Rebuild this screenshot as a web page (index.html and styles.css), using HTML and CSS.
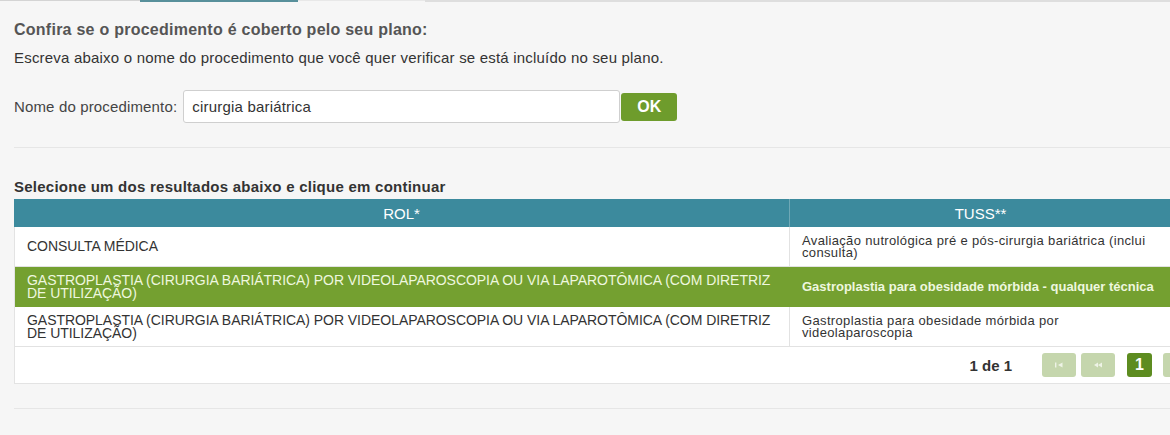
FILE: index.html
```html
<!DOCTYPE html>
<html lang="pt-BR">
<head>
<meta charset="utf-8">
<title>Confira se o procedimento é coberto</title>
<link rel="stylesheet" href="styles.css">
</head>
<body>
<div class="tabs">
  <span class="tabs-left"></span>
  <span class="tabs-active"></span>
  <span class="tabs-mid"></span>
  <span class="tabs-rest"></span>
</div>
<main class="content">
  <h2 class="title">Confira se o procedimento é coberto pelo seu plano:</h2>
  <p class="hint">Escreva abaixo o nome do procedimento que você quer verificar se está incluído no seu plano.</p>
  <form class="search">
    <label class="search-label" for="proc">Nome do procedimento:</label>
    <input class="search-input" id="proc" type="text" value="cirurgia bariátrica">
    <button class="search-btn" type="button">OK</button>
  </form>
  <hr class="divider">
  <h3 class="results-title">Selecione um dos resultados abaixo e clique em continuar</h3>
  <div class="results">
    <div class="row row-head">
      <div class="cell head">ROL*</div>
      <div class="cell head">TUSS**</div>
    </div>
    <div class="row">
      <div class="cell rol">CONSULTA MÉDICA</div>
      <div class="cell tuss">Avaliação nutrológica pré e pós-cirurgia bariátrica (inclui consulta)</div>
    </div>
    <div class="row row-selected">
      <div class="cell rol">GASTROPLASTIA (CIRURGIA BARIÁTRICA) POR VIDEOLAPAROSCOPIA OU VIA LAPAROTÔMICA (COM DIRETRIZ DE UTILIZAÇÃO)</div>
      <div class="cell tuss">Gastroplastia para obesidade mórbida - qualquer técnica</div>
    </div>
    <div class="row">
      <div class="cell rol">GASTROPLASTIA (CIRURGIA BARIÁTRICA) POR VIDEOLAPAROSCOPIA OU VIA LAPAROTÔMICA (COM DIRETRIZ DE UTILIZAÇÃO)</div>
      <div class="cell tuss">Gastroplastia para obesidade mórbida por videolaparoscopia</div>
    </div>
    <div class="pager">
      <span class="pager-count">1 de 1</span>
      <span class="pg-btn pg-first"><svg width="10" height="8" viewBox="0 0 10 8"><rect x="1" y="1.5" width="1.4" height="5"/><path d="M8.5 1.5v5L4 4z"/></svg></span>
      <span class="pg-btn pg-prev"><svg width="10" height="8" viewBox="0 0 10 8"><path d="M5 1.5v5L1 4zM9 1.5v5L5 4z"/></svg></span>
      <span class="pg-btn pg-num">1</span>
      <span class="pg-btn pg-next"><svg width="10" height="8" viewBox="0 0 10 8"><path d="M1 1.5v5L5 4zM5 1.5v5L9 4z"/></svg></span>
      <span class="pg-btn pg-last"><svg width="10" height="8" viewBox="0 0 10 8"><path d="M1.5 1.5v5L6 4z"/><rect x="7.6" y="1.5" width="1.4" height="5"/></svg></span>
    </div>
  </div>
  <hr class="divider divider-bottom">
</main>
</body>
</html>
```

FILE: styles.css
```css
html, body {
  margin: 0;
  overflow: hidden;
}

body {
  width: 1170px;
  height: 435px;
  background: #f6f6f6;
  font-family: "Liberation Sans", Arial, sans-serif;
  color: #333;
}

.tabs {
  display: flex;
  height: 3px;
}

.tabs-left {
  width: 140px;
  border-top: 1px solid #d4d4d4;
}

.tabs-active {
  width: 158px;
  height: 2px;
  background: #58909b;
}

.tabs-mid {
  width: 127px;
  border-top: 1px solid #e8e8e8;
}

.tabs-rest {
  flex: 1;
  border-top: 2px solid #dedede;
}

.content {
  width: 1233px;
  padding-left: 14px;
}

.title {
  margin: 18px 0 0;
  font-size: 16px;
  line-height: 18px;
  letter-spacing: 0.25px;
  font-weight: bold;
  color: #555;
}

.hint {
  margin: 10px 0 0;
  font-size: 15px;
  line-height: 18px;
  letter-spacing: 0.2px;
  color: #333;
}

.search {
  display: flex;
  align-items: center;
  height: 33px;
  margin: 23px 0 0;
}

.search-label {
  margin-right: 6px;
  font-size: 15px;
  line-height: 18px;
  letter-spacing: 0.15px;
  color: #444;
}

.search-input {
  box-sizing: border-box;
  width: 437px;
  height: 33px;
  padding: 0 8px;
  border: 1px solid #cfcfcf;
  border-radius: 3px;
  background: #fff;
  font: 15px "Liberation Sans", Arial, sans-serif;
  letter-spacing: 0.2px;
  color: #333;
}

.search-btn {
  width: 56px;
  height: 28px;
  margin-left: 1px;
  padding: 0;
  border: 0;
  border-radius: 3px;
  background: #6e9c2c;
  color: #fff;
  font: bold 16px "Liberation Sans", Arial, sans-serif;
}

.divider {
  height: 0;
  margin: 24px 0 0;
  border: 0;
  border-top: 1px solid #e6e6e6;
}

.results-title {
  margin: 31px 0 4px;
  font-size: 15px;
  line-height: 16px;
  letter-spacing: 0.25px;
  font-weight: bold;
  color: #333;
}

.results {
  box-sizing: border-box;
  width: 1233px;
  background: #fff;
  border: 1px solid #e3e3e3;
  border-top: 0;
}

.row {
  display: grid;
  grid-template-columns: 775px 381px;
  width: 1156px;
}

.row-head {
  grid-template-columns: 776px 381px;
  width: 1157px;
  margin-left: -1px;
  background: #3c8a9d;
}

.cell {
  box-sizing: border-box;
  display: flex;
  align-items: center;
  height: 40px;
  padding: 0 12px;
  border-bottom: 1px solid #e2e2e2;
}

.cell:first-child {
  border-right: 1px solid #e2e2e2;
}

.head {
  justify-content: center;
  height: 28px;
  border-bottom: 0;
  color: #fff;
  font-size: 15px;
}

.head:first-child {
  border-right: 1px solid #6fa8b6;
}

.rol {
  font-size: 14px;
  line-height: 13px;
  letter-spacing: -0.05px;
  color: #333;
}

.tuss {
  font-size: 13px;
  line-height: 12px;
  letter-spacing: 0.35px;
  color: #333;
}

.row-selected {
  background: #74a030;
}

.row-selected .cell {
  color: #eef7df;
  border-bottom-color: #74a030;
}

.row-selected .cell:first-child {
  border-right-color: #74a030;
}

.row-selected .tuss {
  font-weight: bold;
  letter-spacing: 0;
}

.pager {
  display: flex;
  align-items: center;
  justify-content: flex-end;
  height: 36px;
  padding-right: 10px;
}

.pager-count {
  margin-right: 30px;
  font-size: 15px;
  font-weight: bold;
  color: #333;
}

.pg-btn {
  display: flex;
  align-items: center;
  justify-content: center;
  width: 34px;
  height: 24px;
  margin-left: 5px;
  border-radius: 3px;
  background: #c5d6ad;
  fill: #eef3e6;
}

.pg-first {
  margin-left: 0;
}

.pg-num {
  width: 25px;
  margin: 0 11px 0 12px;
  background: #5d8c20;
  color: #fff;
  font-size: 16px;
  font-weight: bold;
}

.pg-next {
  margin-left: 0;
}

.divider-bottom {
  margin-top: 24px;
}
```
